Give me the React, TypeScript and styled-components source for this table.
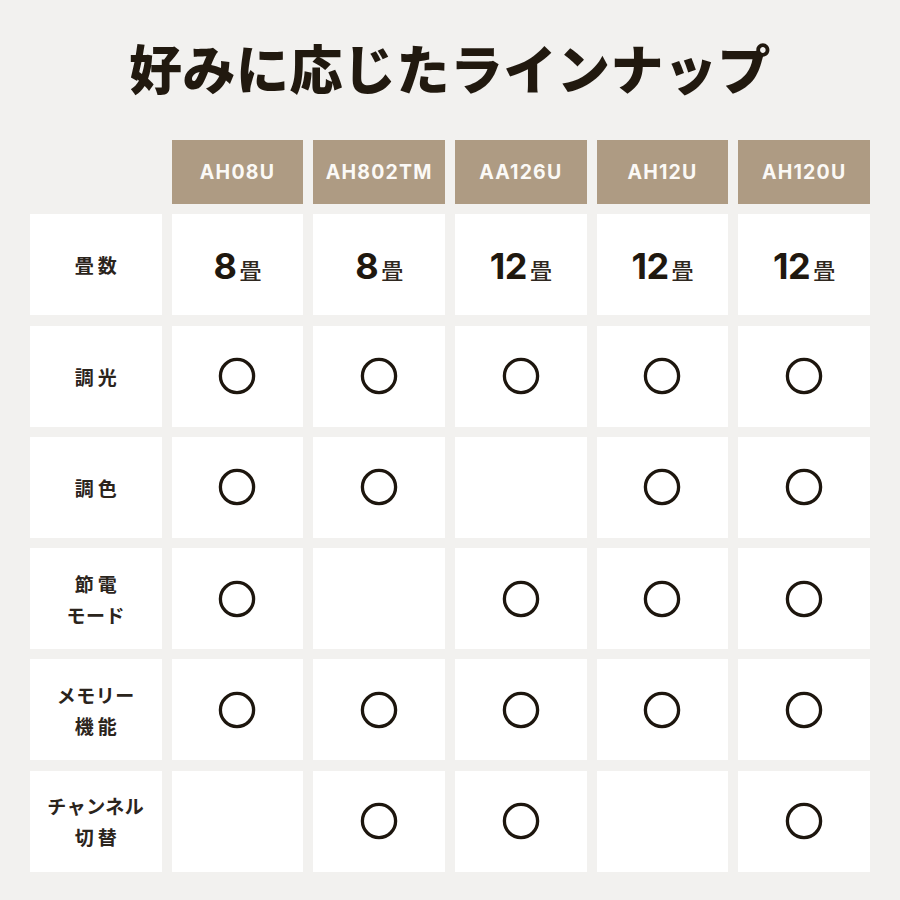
import React from 'react';
import styled, { createGlobalStyle } from 'styled-components';

const GlobalStyle = createGlobalStyle`
  html, body {
    margin: 0;
    padding: 0;
    background: #f2f1ef;
  }
  body {
    font-family: "Noto Sans CJK JP", "Noto Sans", sans-serif;
    color: #211a12;
  }
`;

const Page = styled.div`
  width: 900px;
  height: 900px;
  box-sizing: border-box;
  padding: 0 30px;
  background: #f2f1ef;
`;

const Title = styled.h1`
  margin: 0;
  height: 140px;
  box-sizing: border-box;
  padding-bottom: 6px;
  display: flex;
  align-items: center;
  justify-content: center;
  font-size: 53px;
  font-weight: 900;
  letter-spacing: 0.5px;
  color: #21190f;
`;

const Grid = styled.div`
  display: grid;
  grid-template-columns: repeat(6, 1fr);
  grid-template-rows: 64px repeat(6, 101px);
  column-gap: 10px;
  row-gap: 10.3px;
`;

const Blank = styled.div``;

const HeadCell = styled.div`
  background: #ae9b83;
  color: #fbf9f6;
  display: flex;
  align-items: center;
  justify-content: center;
  font-family: Inter, "Liberation Sans", sans-serif;
  font-weight: 700;
  font-size: 19.5px;
  letter-spacing: 1.2px;
`;

const LabelCell = styled.div`
  background: #ffffff;
  display: flex;
  align-items: center;
  justify-content: center;
  text-align: center;
  font-size: 19px;
  font-weight: 700;
  line-height: 31px;
  color: #2b241c;
`;

const LabelLine = styled.div<{ $wide?: boolean }>`
  letter-spacing: ${({ $wide }) => ($wide ? '4px' : '0.5px')};
  margin-right: ${({ $wide }) => ($wide ? '-4px' : '0')};
`;

const ValueCell = styled.div`
  background: #ffffff;
  display: flex;
  align-items: center;
  justify-content: center;
`;

const Size = styled.span`
  display: flex;
  align-items: baseline;
  margin-top: 2px;
`;

const Num = styled.span`
  font-family: Inter, "Liberation Sans", sans-serif;
  font-size: 36px;
  font-weight: 700;
  letter-spacing: -0.5px;
  color: #1f180f;
`;

const Unit = styled.span`
  font-size: 22px;
  font-weight: 500;
  margin-left: 3px;
  color: #2f2820;
`;

const Mark = () => (
  <svg width="40" height="40" viewBox="0 0 40 40">
    <circle cx="20" cy="20" r="16.6" fill="none" stroke="#1d160e" strokeWidth="3.3" />
  </svg>
);

const models = ['AH08U', 'AH802TM', 'AA126U', 'AH12U', 'AH120U'];
const sizes = ['8', '8', '12', '12', '12'];

const isKanji = (s: string) => /^[\u4e00-\u9fff]+$/.test(s);

const features: { label: string[]; marks: boolean[] }[] = [
  { label: ['調光'], marks: [true, true, true, true, true] },
  { label: ['調色'], marks: [true, true, false, true, true] },
  { label: ['節電', 'モード'], marks: [true, false, true, true, true] },
  { label: ['メモリー', '機能'], marks: [true, true, true, true, true] },
  { label: ['チャンネル', '切替'], marks: [false, true, true, false, true] },
];

export default function App() {
  return (
    <>
      <GlobalStyle />
      <Page>
        <Title>好みに応じたラインナップ</Title>
        <Grid>
          <Blank />
          {models.map((m) => (
            <HeadCell key={m}>{m}</HeadCell>
          ))}

          <LabelCell>
            <LabelLine $wide>畳数</LabelLine>
          </LabelCell>
          {sizes.map((s, i) => (
            <ValueCell key={i}>
              <Size>
                <Num>{s}</Num>
                <Unit>畳</Unit>
              </Size>
            </ValueCell>
          ))}

          {features.map((f) => (
            <React.Fragment key={f.label.join('')}>
              <LabelCell>
                <div>
                  {f.label.map((l) => (
                    <LabelLine key={l} $wide={isKanji(l)}>
                      {l}
                    </LabelLine>
                  ))}
                </div>
              </LabelCell>
              {f.marks.map((on, i) => (
                <ValueCell key={i}>{on && <Mark />}</ValueCell>
              ))}
            </React.Fragment>
          ))}
        </Grid>
      </Page>
    </>
  );
}
